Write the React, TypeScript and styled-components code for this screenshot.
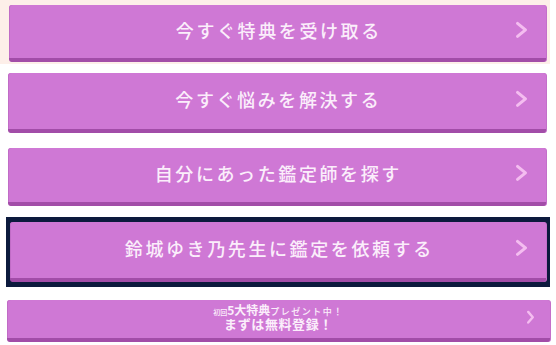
import React from "react";
import styled, { createGlobalStyle } from "styled-components";

const Global = createGlobalStyle`
  html, body { margin: 0; padding: 0; background: #ffffff; }
  body { font-family: "Noto Sans CJK JP", "Noto Sans", sans-serif; }
`;

const Page = styled.div`
  display: flex;
  flex-direction: column;
  width: 556px;
`;

const Frame = styled.div<{ $bg?: string; $mt: number; $ml: number; $w: number; $pad: string }>`
  margin-top: ${(p) => p.$mt}px;
  margin-left: ${(p) => p.$ml}px;
  width: ${(p) => p.$w}px;
  box-sizing: border-box;
  padding: ${(p) => p.$pad};
  background: ${(p) => p.$bg || "transparent"};
  display: flex;
`;

const Button = styled.a<{ $h: number }>`
  flex: 1;
  position: relative;
  height: ${(p) => p.$h}px;
  box-sizing: border-box;
  background: #cf78d5;
  border-radius: 3px;
  border-bottom: 4px solid #a24da8;
  box-shadow: inset 1px 0 0 #c06cc6, 1px 0 0 #c46fca;
  display: flex;
  align-items: center;
  justify-content: center;
  color: #fbeefb;
  text-decoration: none;
  cursor: pointer;
`;

const Label = styled.span`
  font-size: 18px;
  font-weight: 500;
  letter-spacing: 2.6px;
  line-height: 1;
  padding-left: 2.6px;
  margin-top: -4px;
`;

const Chevron = styled.svg<{ $right: number }>`
  position: absolute;
  right: ${(p) => p.$right}px;
  top: 50%;
  transform: translateY(-62%);
`;

const Stack = styled.div`
  display: flex;
  flex-direction: column;
  align-items: center;
  margin-top: -3px;
`;

const Small = styled.span`
  display: flex;
  align-items: baseline;
  font-weight: 700;
  color: #fbeefb;
  line-height: 12px;
  height: 12px;
`;

const Tiny = styled.span<{ $size: number; $ls: number }>`
  font-size: ${(p) => p.$size}px;
  font-weight: 500;
  letter-spacing: ${(p) => p.$ls}px;
`;

const Mid = styled.span`
  font-size: 12px;
  font-weight: 700;
`;

const Second = styled.span`
  font-size: 13px;
  font-weight: 700;
  letter-spacing: 0.6px;
  line-height: 14px;
  margin-top: 1px;
`;

const Arrow = ({ w, h, right, sw }: { w: number; h: number; right: number; sw: number }) => (
  <Chevron $right={right} width={w} height={h} viewBox={`0 0 ${w} ${h}`}>
    <polyline
      points={`${sw / 2 + 1},${sw / 2 + 1} ${w - sw / 2 - 1},${h / 2} ${sw / 2 + 1},${h - sw / 2 - 1}`}
      fill="none"
      stroke="#f4bdf0"
      strokeWidth={sw}
      strokeLinecap="round"
      strokeLinejoin="round"
    />
  </Chevron>
);

export default function App() {
  return (
    <>
      <Global />
      <Page>
        <Frame $bg="#fdefe9" $mt={0} $ml={0} $w={550} $pad="5px 4px 2px 9px">
          <Button $h={57}>
            <Label>今すぐ特典を受け取る</Label>
            <Arrow w={13} h={18} right={18} sw={3} />
          </Button>
        </Frame>
        <Frame $mt={9} $ml={8} $w={538} $pad="0">
          <Button $h={60}>
            <Label>今すぐ悩みを解決する</Label>
            <Arrow w={13} h={18} right={18} sw={3} />
          </Button>
        </Frame>
        <Frame $mt={15} $ml={8} $w={538} $pad="0">
          <Button $h={58}>
            <Label>自分にあった鑑定師を探す</Label>
            <Arrow w={13} h={18} right={18} sw={3} />
          </Button>
        </Frame>
        <Frame $bg="#0c1a3d" $mt={11} $ml={6} $w={544} $pad="5px 4px 5px 4px">
          <Button $h={60}>
            <Label>鈴城ゆき乃先生に鑑定を依頼する</Label>
            <Arrow w={13} h={18} right={18} sw={3} />
          </Button>
        </Frame>
        <Frame $mt={13} $ml={7} $w={543} $pad="0">
          <Button $h={42}>
            <Stack>
              <Small>
                <Tiny $size={7} $ls={0}>初回</Tiny>
                <Mid>5大特典</Mid>
                <Tiny $size={9} $ls={1.5}>プレゼント中！</Tiny>
              </Small>
              <Second>まずは無料登録！</Second>
            </Stack>
            <Arrow w={9} h={15} right={15} sw={2.4} />
          </Button>
        </Frame>
      </Page>
    </>
  );
}
